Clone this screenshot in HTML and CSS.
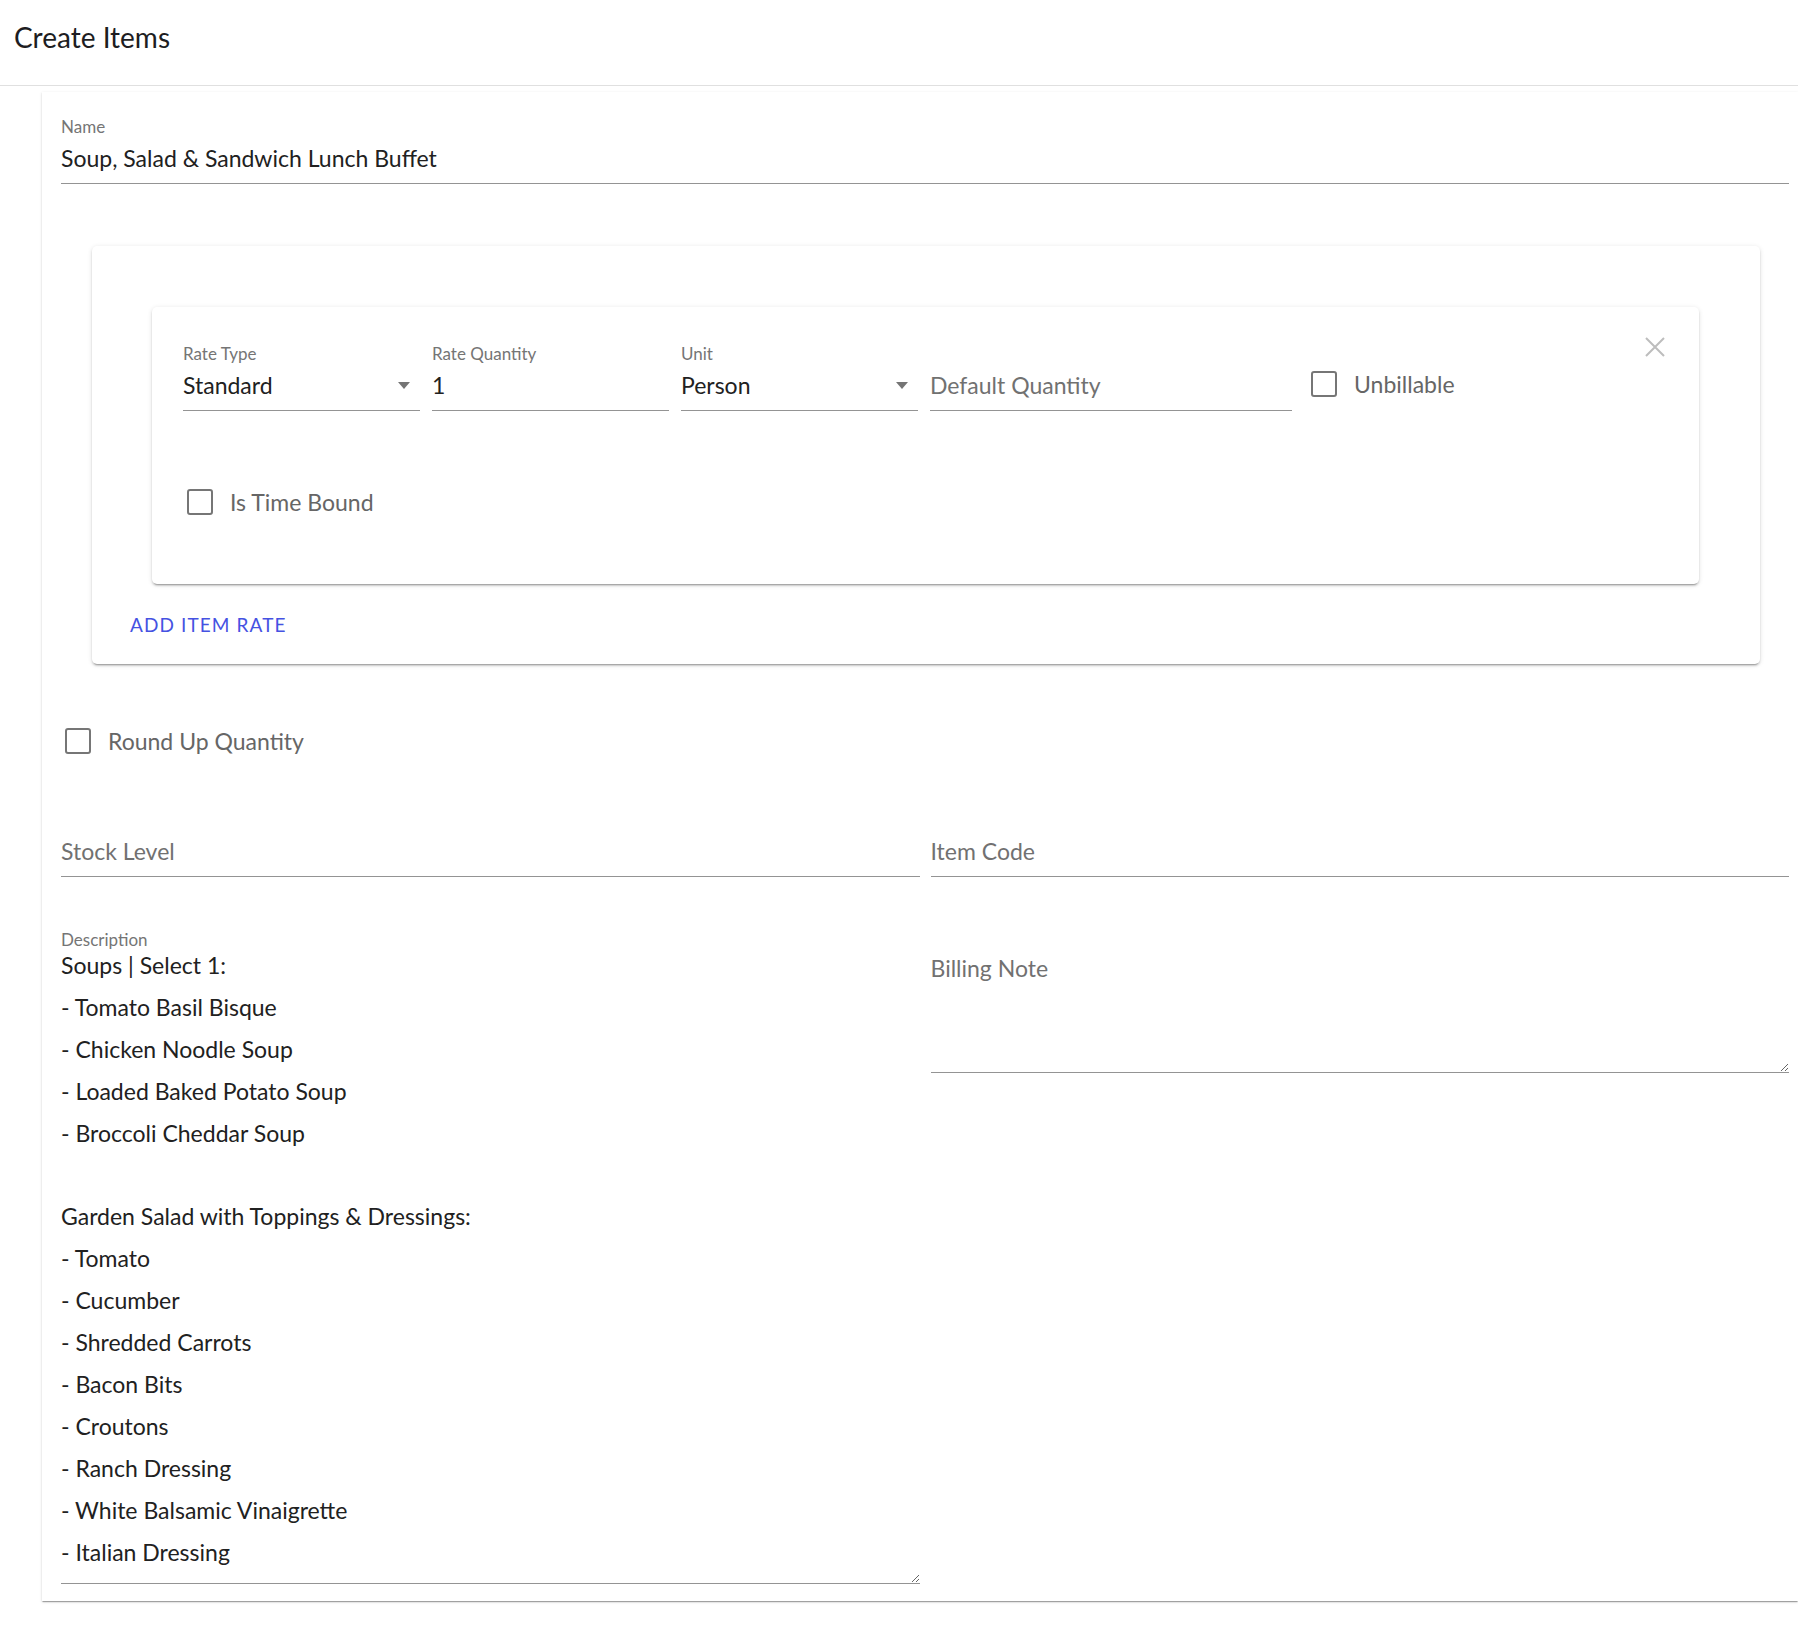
FILE: index.html
```html
<!DOCTYPE html>
<html lang="en">
<head>
<meta charset="UTF-8">
<meta name="viewport" content="width=device-width, initial-scale=1.0">
<title>Create Items</title>
<link rel="stylesheet" href="styles.css">
</head>
<body>

<header class="topbar">
    <h1 class="title">Create Items</h1>
</header>

<main class="sheet">
    <div class="field name-field">
        <label class="field-label" for="itemName">Name</label>
        <div class="field-control">
            <input id="itemName" type="text" value="Soup, Salad &amp; Sandwich Lunch Buffet">
        </div>
    </div>

    <section class="rates-card">
        <div class="rate-card">
            <button class="rate-remove" type="button" aria-label="Remove rate">
                <svg width="20" height="20" viewBox="0 0 20 20"><path d="M1 1L19 19M19 1L1 19" stroke="#bdbdbd" stroke-width="2" fill="none"/></svg>
            </button>

            <div class="rate-row">
                <div class="rate-field">
                    <span class="rate-label">Rate Type</span>
                    <div class="rate-control">
                        <span class="select-value">Standard</span>
                        <span class="caret"></span>
                    </div>
                </div>
                <div class="rate-field">
                    <span class="rate-label">Rate Quantity</span>
                    <div class="rate-control">
                        <input type="text" value="1">
                    </div>
                </div>
                <div class="rate-field">
                    <span class="rate-label">Unit</span>
                    <div class="rate-control">
                        <span class="select-value">Person</span>
                        <span class="caret"></span>
                    </div>
                </div>
                <div class="rate-field">
                    <span class="rate-label"></span>
                    <div class="rate-control">
                        <input type="text" placeholder="Default Quantity">
                    </div>
                </div>
                <label class="check unbillable">
                    <input type="checkbox">
                    <span>Unbillable</span>
                </label>
            </div>

            <label class="check time-bound">
                <input type="checkbox">
                <span>Is Time Bound</span>
            </label>
        </div>

        <button class="add-rate" type="button">Add Item Rate</button>
    </section>

    <label class="check round-up">
        <input type="checkbox">
        <span>Round Up Quantity</span>
    </label>

    <div class="two-col stock-row">
        <div class="field-control">
            <input type="text" placeholder="Stock Level">
        </div>
        <div class="field-control">
            <input type="text" placeholder="Item Code">
        </div>
    </div>

    <div class="two-col notes-row">
        <div class="field">
            <label class="field-label note-label" for="description">Description</label>
            <textarea id="description" class="description">Soups | Select 1:
- Tomato Basil Bisque
- Chicken Noodle Soup
- Loaded Baked Potato Soup
- Broccoli Cheddar Soup

Garden Salad with Toppings &amp; Dressings:
- Tomato
- Cucumber
- Shredded Carrots
- Bacon Bits
- Croutons
- Ranch Dressing
- White Balsamic Vinaigrette
- Italian Dressing</textarea>
        </div>
        <div class="field">
            <span class="field-label note-label"></span>
            <textarea class="billing-note" placeholder="Billing Note"></textarea>
        </div>
    </div>
</main>

</body>
</html>
```

FILE: styles.css
```css
/* Page */
body {
    margin: 0;
    font-family: Lato, "Open Sans", sans-serif;
    color: #212121;
    background: #fff;
    overflow: hidden;
}

.topbar {
    height: 85px;
    border-bottom: 1px solid #e0e0e0;
}

.title {
    margin: 0;
    padding: 21px 0 0 14px;
    font-size: 28px;
    line-height: 32px;
    font-weight: 400;
    color: #1d1d22;
}

/* Main paper */
.sheet {
    margin: 6px 0 10px 42px;
    padding: 26px 9px 17px 19px;
    box-shadow: 0 2px 1px -1px rgba(0, 0, 0, 0.2), 0 1px 1px 0 rgba(0, 0, 0, 0.14), 0 1px 3px 0 rgba(0, 0, 0, 0.12);
}

.field {
    display: flex;
    flex-direction: column;
}

.field-label {
    font-size: 17px;
    line-height: 18px;
    color: #757575;
}

.field-control {
    display: flex;
    align-items: center;
    padding-bottom: 11px;
    border-bottom: 1px solid #949494;
}

.name-field .field-control {
    margin-top: 8px;
}

input[type="text"] {
    flex: 1;
    min-width: 0;
    height: 28px;
    padding: 0;
    border: 0;
    outline: none;
    background: transparent;
    font-family: inherit;
    font-size: 23px;
    line-height: 28px;
    color: #212121;
}

input::placeholder,
textarea::placeholder {
    color: #717171;
    opacity: 1;
}

/* Rates */
.rates-card {
    margin: 62px 29px 0 31px;
    padding: 61px 61px 28px 60px;
    border-radius: 5px;
    box-shadow: 0 3px 1px -2px rgba(0, 0, 0, 0.2), 0 2px 2px 0 rgba(0, 0, 0, 0.14), 0 1px 5px 0 rgba(0, 0, 0, 0.12);
}

.rate-card {
    position: relative;
    padding: 39px 31px 62px 31px;
    border-radius: 5px;
    box-shadow: 0 3px 1px -2px rgba(0, 0, 0, 0.2), 0 2px 2px 0 rgba(0, 0, 0, 0.14), 0 1px 5px 0 rgba(0, 0, 0, 0.12);
}

.rate-remove {
    position: absolute;
    top: 30px;
    right: 34px;
    width: 20px;
    height: 20px;
    padding: 0;
    border: 0;
    background: none;
    cursor: pointer;
}

.rate-remove svg {
    display: block;
}

.rate-row {
    display: grid;
    grid-template-columns: 237px 237px 237px 362px auto;
    column-gap: 12px;
    align-items: start;
}

.rate-label {
    display: block;
    height: 16px;
    font-size: 17px;
    line-height: 16px;
    color: #757575;
}

.rate-control {
    display: flex;
    align-items: center;
    margin-top: 9px;
    padding-bottom: 10px;
    border-bottom: 1px solid #949494;
}

.rate-control input[type="text"] {
    height: 29px;
    line-height: 29px;
}

.select-value {
    flex: 1;
    font-size: 23px;
    line-height: 29px;
}

.caret {
    width: 0;
    height: 0;
    margin-right: 10px;
    border-left: 6.5px solid transparent;
    border-right: 6.5px solid transparent;
    border-top: 7px solid #757575;
}

/* Checkboxes */
.check {
    display: flex;
    align-items: center;
    gap: 17px;
    height: 40px;
    font-size: 23px;
    color: #666;
}

.check input {
    appearance: none;
    width: 26px;
    height: 26px;
    margin: 0 0 0 4px;
    border: 2.7px solid #767676;
    border-radius: 3px;
    box-sizing: border-box;
}

.unbillable {
    margin-top: 18px;
}

.unbillable input {
    margin-left: 7px;
}

.time-bound {
    margin-top: 71px;
}

.add-rate {
    display: block;
    margin: 30px 0 0 -22px;
    padding: 0;
    border: 0;
    background: none;
    font-family: inherit;
    font-size: 19px;
    line-height: 22px;
    letter-spacing: 1.1px;
    text-transform: uppercase;
    color: #4552e2;
    cursor: pointer;
}

.round-up {
    margin-top: 57px;
}

/* Lower fields */
.two-col {
    display: grid;
    grid-template-columns: 1fr 1fr;
    column-gap: 11px;
    align-items: start;
}

.stock-row {
    margin-top: 76px;
}

.notes-row {
    margin-top: 55px;
}

.note-label {
    height: 15px;
    line-height: 15px;
}

textarea {
    display: block;
    width: 100%;
    box-sizing: border-box;
    margin-top: -2px;
    border: 0;
    border-bottom: 1px solid #949494;
    outline: none;
    resize: vertical;
    overflow: hidden;
    background: transparent;
    font-family: inherit;
    font-size: 23px;
    line-height: 41.9px;
    color: #212121;
}

.description {
    height: 639px;
    padding: 0 0 9px;
}

.billing-note {
    height: 128px;
    padding: 3px 0 0;
}
```
